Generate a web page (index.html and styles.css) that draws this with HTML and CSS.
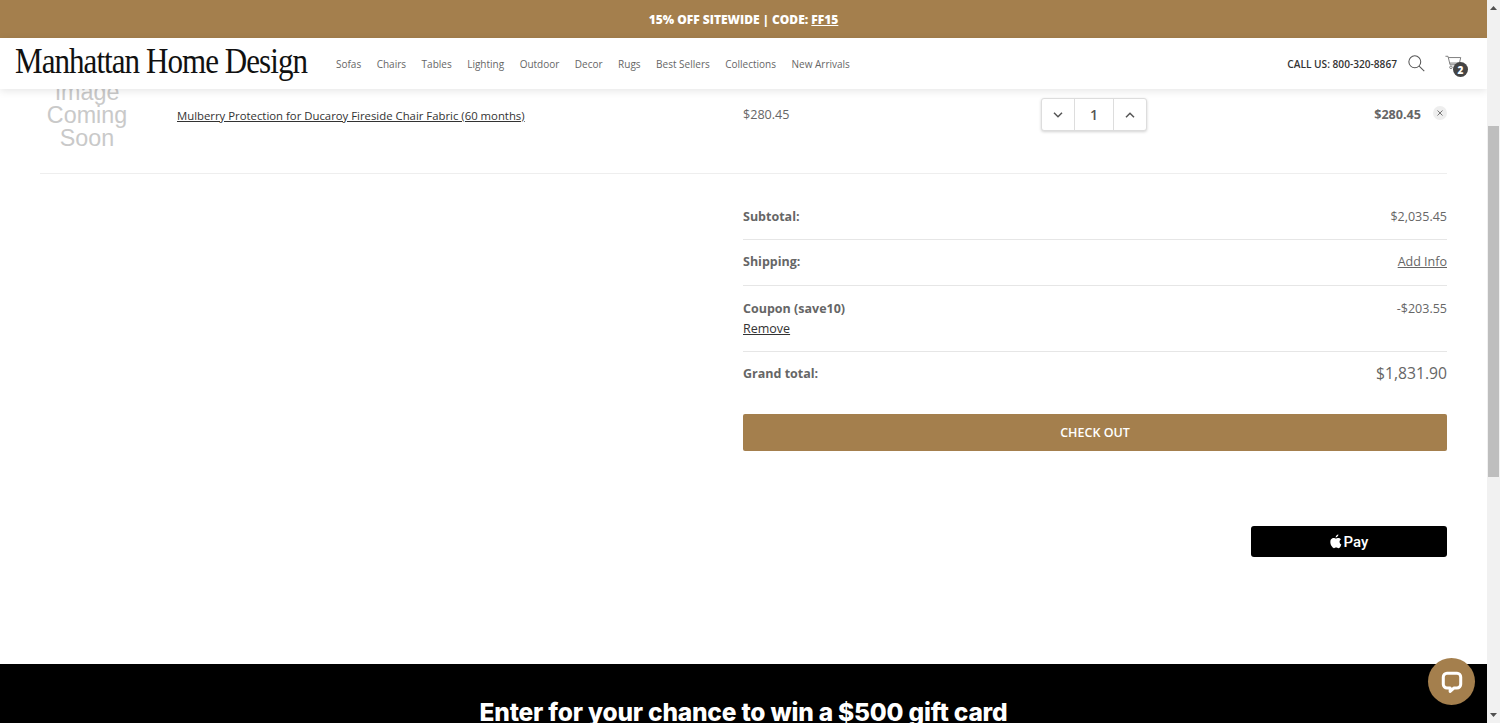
FILE: index.html
```html
<!DOCTYPE html>
<html lang="en">
<head>
<meta charset="utf-8">
<title>Cart - Manhattan Home Design</title>
<link rel="stylesheet" href="styles.css">
</head>
<body>
<div class="window">
  <div class="page">
    <div class="promo">15% OFF SITEWIDE | CODE:&nbsp;<a class="promo-code" href="#">FF15</a></div>
    <header class="site-header">
      <a class="logo" href="#">Manhattan Home Design</a>
      <nav class="nav">
        <a href="#">Sofas</a><a href="#">Chairs</a><a href="#">Tables</a><a href="#">Lighting</a><a href="#">Outdoor</a><a href="#">Decor</a><a href="#">Rugs</a><a href="#">Best Sellers</a><a href="#">Collections</a><a href="#">New Arrivals</a>
      </nav>
      <div class="header-tools">
        <span class="call">CALL US: 800-320-8867</span>
        <svg class="search-icon" width="17" height="17" viewBox="0 0 18 18" fill="none" stroke="#555" stroke-width="1.100"><circle cx="7.200" cy="7.200" r="6.300"/><path d="M11.800 11.800 17.200 17"/></svg>
        <span class="cart">
          <svg width="17" height="17" viewBox="0 0 20 20" fill="none" stroke="#777" stroke-width="1.100"><path d="M.5 1.500h3l2.500 10h10"/><path d="M4 3h14.500l-1.500 6.500H5.500"/><circle cx="7" cy="14.500" r="1.500"/><circle cx="14" cy="14.500" r="1.500"/></svg>
          <span class="cart-badge">2</span>
        </span>
      </div>
    </header>
    <main class="content">
      <section class="cart-row">
        <div class="placeholder"><span>Image</span><span>Coming</span><span>Soon</span></div>
        <a class="item-name" href="#">Mulberry Protection for Ducaroy Fireside Chair Fabric (60 months)</a>
        <div class="item-price">$280.45</div>
        <div class="qty">
          <button class="qty-btn" type="button"><svg width="10" height="6" viewBox="0 0 10 6" fill="none" stroke="#555" stroke-width="1.500"><path d="m1 .8 4 4 4-4"/></svg></button>
          <span class="qty-val">1</span>
          <button class="qty-btn" type="button"><svg width="10" height="6" viewBox="0 0 10 6" fill="none" stroke="#555" stroke-width="1.500"><path d="m1 5.200 4-4 4 4"/></svg></button>
        </div>
        <div class="item-total">$280.45</div>
        <button class="remove-x" type="button"><svg width="6" height="6" viewBox="0 0 6 6" stroke="#777" stroke-width="1"><path d="m.5.5 5 5m0-5-5 5"/></svg></button>
      </section>
      <section class="summary">
        <div class="sum-line"><strong>Subtotal:</strong><span>$2,035.45</span></div>
        <div class="sum-line ship"><strong>Shipping:</strong><a href="#" class="add-info">Add Info</a></div>
        <div class="sum-line coupon"><div><strong>Coupon (save10)</strong><a href="#" class="coupon-remove">Remove</a></div><span>-$203.55</span></div>
        <div class="sum-line grand"><strong>Grand total:</strong><span class="grand-val">$1,831.90</span></div>
        <a href="#" class="checkout">CHECK OUT</a>
        <div class="pay-row">
          <a href="#" class="apple-pay"><svg width="12" height="15" viewBox="0 0 170 200" fill="#fff"><path d="M150 170c-8 12-17 24-30 24-13 1-17-8-32-8s-20 8-32 8c-13 1-23-13-31-25C8 145-4 102 13 73c8-14 23-23 39-23 12 0 24 8 32 8 7 0 22-10 37-9 6 0 24 3 35 19-1 1-21 12-21 36 0 29 25 39 26 39-1 1-4 13-11 27zM109 27c7-8 11-19 10-27-10 0-21 6-28 14-6 7-12 18-10 28 10 1 21-6 28-15z"/></svg><span>Pay</span></a>
        </div>
      </section>
    </main>
    <footer class="signup">
      <h2>Enter for your chance to win a $500 gift card</h2>
    </footer>
  </div>
  <div class="scrollbar">
    <svg class="sb-arrow" width="7" height="4" viewBox="0 0 7 4" fill="#505050"><path d="M0 4 3.500 0 7 4z"/></svg>
    <div class="sb-track"><div class="sb-thumb"></div></div>
    <svg class="sb-arrow" width="7" height="4" viewBox="0 0 7 4" fill="#505050"><path d="M0 0h7L3.500 4z"/></svg>
  </div>
  <button class="chat" type="button" aria-label="Chat"><svg width="22" height="22" viewBox="0 0 24 24" fill="none"><path d="M6.500 2.500h11a4 4 0 0 1 4 4v8a4 4 0 0 1-4 4h-3.200L10 22.300V18.500H6.500a4 4 0 0 1-4-4v-8a4 4 0 0 1 4-4z" stroke="#fff" stroke-width="3.300" stroke-linejoin="round"/></svg></button>
</div>
</body>
</html>
```
FILE: styles.css
```css
* { box-sizing: border-box; }
html, body { margin: 0; height: 100%; overflow: hidden; background: #fff; }
body { font-family: "Open Sans", "Liberation Sans", sans-serif; color: #666; font-size: 14px; }
a { color: inherit; }
button { font: inherit; padding: 0; border: 0; background: none; }

.window { display: flex; height: 723px; position: relative; }
.page { flex: 1; min-width: 0; display: flex; flex-direction: column; overflow: hidden; }

.promo { flex: none; height: 38px; padding-top: 1px; background: #a47f4d; color: #fff; font-weight: 800; font-size: 12px; display: flex; align-items: center; justify-content: center; }
.promo-code { color: #fff; }

.site-header { flex: none; height: 51px; background: #fff; display: flex; align-items: center; padding: 0 25px 0 15px; position: relative; z-index: 2; box-shadow: 0 2px 8px rgba(0,0,0,.1); }
.logo { flex: none; width: 292px; font-family: "Liberation Serif", serif; font-size: 36px; letter-spacing: -1.100px; color: #111; text-decoration: none; line-height: 1; margin-top: -5px; white-space: nowrap; transform: scaleX(.862); transform-origin: left center; }
.nav { display: flex; gap: 15.500px; margin-left: 29px; font-size: 10px; color: #666; }
.nav a { text-decoration: none; white-space: nowrap; }
.header-tools { margin-left: auto; display: flex; align-items: center; }
.call { font-size: 10.150px; font-weight: 600; color: #333; margin-right: 11px; white-space: nowrap; }
.search-icon { margin-right: 20px; }
.cart { position: relative; display: block; width: 17px; height: 17px; }
.cart-badge { position: absolute; right: -6px; bottom: -5px; width: 15px; height: 15px; border-radius: 50%; background: #444; color: #fff; font-size: 10px; font-weight: 800; display: flex; align-items: center; justify-content: center; }

.content { flex: 1; min-height: 0; padding: 0 40px; }

.cart-row { height: 85px; display: flex; align-items: flex-start; border-bottom: 1px solid #eee; }
.placeholder { flex: none; width: 94px; margin-top: -8px; display: flex; flex-direction: column; align-items: center; font-family: "Liberation Sans", sans-serif; font-size: 23.300px; line-height: 23px; color: #c9c9c9; }
.item-name { flex: none; width: 566px; margin: 18px 0 0 43px; font-size: 11.350px; line-height: 18px; color: #333; }
.item-price { flex: none; width: 298px; margin-top: 17px; font-size: 12.600px; line-height: 18px; }
.qty { flex: none; display: flex; height: 33px; margin-top: 9px; border: 1px solid #ddd; border-radius: 3px; box-shadow: 0 1px 3px rgba(0,0,0,.18); background: #fff; }
.qty-btn { width: 32px; display: flex; align-items: center; justify-content: center; }
.qty-val { width: 40px; border-left: 1px solid #ddd; border-right: 1px solid #ddd; display: flex; align-items: center; justify-content: center; font-size: 14px; font-weight: 600; color: #555; }
.item-total { flex: 1; margin-top: 17px; text-align: right; font-size: 12.600px; line-height: 18px; font-weight: 700; }
.remove-x { flex: none; width: 14px; height: 14px; margin: 17px 0 0 12px; border-radius: 50%; background: #eee; display: flex; align-items: center; justify-content: center; }

.summary { margin-left: 703px; }
.sum-line { display: flex; justify-content: space-between; align-items: flex-start; padding: 33px 0 13px; border-bottom: 1px solid #e6e6e6; font-size: 12.500px; line-height: 19px; }
.sum-line + .sum-line { padding-top: 12px; }
.sum-line.ship { padding-bottom: 14px; }
.sum-line strong { font-weight: 700; }
.add-info { text-decoration: underline; }
.sum-line.coupon { padding-top: 13px; padding-bottom: 13px; }
.coupon strong { display: block; }
.coupon-remove { display: block; color: #333; margin-top: 1px; }
.sum-line.grand { border-bottom: 0; padding-bottom: 0; align-items: center; }
.grand-val { font-size: 15.700px; }
.checkout { display: flex; height: 37px; margin-top: 31px; background: #a47f4d; border-radius: 2px; color: #fff; font-size: 12.500px; font-weight: 600; text-decoration: none; align-items: center; justify-content: center; }
.pay-row { display: flex; justify-content: flex-end; margin-top: 75px; }
.apple-pay { width: 196px; height: 31px; background: #000; border-radius: 3px; color: #fff; text-decoration: none; display: flex; align-items: center; justify-content: center; gap: 2px; font-size: 15px; font-weight: 500; font-family: "Roboto", "Liberation Sans", sans-serif; }

.signup { flex: none; height: 59px; background: #000; overflow: hidden; text-align: center; }
.signup h2 { margin: 33px 0 0; font-family: "Inter", "Liberation Sans", sans-serif; font-size: 24.500px; line-height: 30px; font-weight: 800; letter-spacing: -.2px; color: #fff; }

.scrollbar { flex: none; width: 13px; background: #f1f1f1; display: flex; flex-direction: column; align-items: center; }
.sb-arrow { flex: none; margin: 6px 0; }
.sb-track { flex: 1; width: 100%; padding: 0 1px; }
.sb-thumb { height: 351px; margin-top: 110px; background: #bebebe; }

.chat { position: absolute; left: 1428px; top: 658px; width: 47px; height: 47px; border-radius: 50%; background: #a47f4d; display: flex; align-items: center; justify-content: center; }
```
